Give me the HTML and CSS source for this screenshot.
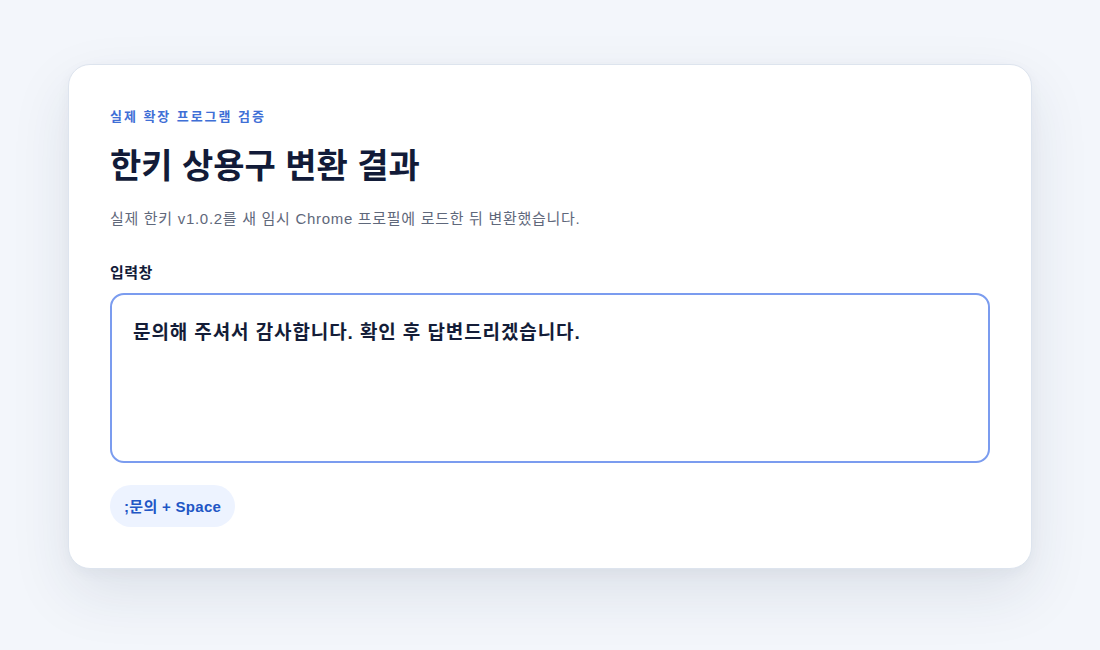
FILE: index.html
```html
<!DOCTYPE html>
<html lang="ko">
<head>
  <meta charset="UTF-8" />
  <meta name="viewport" content="width=device-width, initial-scale=1.0"/>
  <title>한키 상용구 변환 결과</title>
  <link rel="stylesheet" href="styles.css">
</head>
<body>

  <main class="card">
    <p class="eyebrow">실제 확장 프로그램 검증</p>
    <h1 class="title">한키 상용구 변환 결과</h1>
    <p class="desc">실제 한키 v1.0.2를 새 임시 Chrome 프로필에 로드한 뒤 변환했습니다.</p>

    <label class="field-label" for="output">입력창</label>
    <div class="field" id="output">문의해 주셔서 감사합니다. 확인 후 답변드리겠습니다.</div>

    <span class="chip">;문의 + Space</span>
  </main>

</body>
</html>
```

FILE: styles.css
```css
* {
  box-sizing: border-box;
}

html {
  background: #f3f6fb;
}

body {
  margin: 0;
  min-height: 100vh;
  font-family: 'Liberation Sans', 'Noto Sans CJK KR', sans-serif;
  background: #f3f6fb;
  color: #141d38;
  padding: 64px 0 60px;
}

.card {
  width: 964px;
  margin: 0 auto;
  background: #ffffff;
  border: 1px solid #dde4ee;
  border-radius: 22px;
  padding: 42px 41px 41px;
  box-shadow: 0 24px 60px rgba(30, 45, 80, 0.10), 0 4px 14px rgba(30, 45, 80, 0.04);
}

.eyebrow {
  margin: 0;
  font-size: 13px;
  font-weight: 700;
  letter-spacing: 0.15em;
  color: #3f6fd6;
  line-height: 20px;
}

.title {
  margin: 18px 0 0;
  font-size: 34px;
  font-weight: 700;
  line-height: 42px;
  color: #121b38;
}

.desc {
  margin: 21px 0 0;
  font-size: 15px;
  letter-spacing: 0.7px;
  line-height: 22px;
  color: #5f687b;
}

.field-label {
  display: block;
  margin-top: 32px;
  font-size: 15px;
  font-weight: 700;
  letter-spacing: 0.5px;
  line-height: 22px;
  color: #121b38;
}

.field {
  margin-top: 9px;
  height: 170px;
  border: 2px solid #7b9cef;
  border-radius: 14px;
  padding: 25px 21px;
  font-size: 19px;
  font-weight: 700;
  letter-spacing: 0.9px;
  line-height: 26px;
  color: #141d38;
}

.chip {
  display: inline-block;
  margin-top: 22px;
  padding: 0 14px;
  height: 42px;
  line-height: 43px;
  border-radius: 21px;
  background: #edf3ff;
  color: #2156c5;
  font-size: 15px;
  font-weight: 700;
  letter-spacing: 0.3px;
}
```
